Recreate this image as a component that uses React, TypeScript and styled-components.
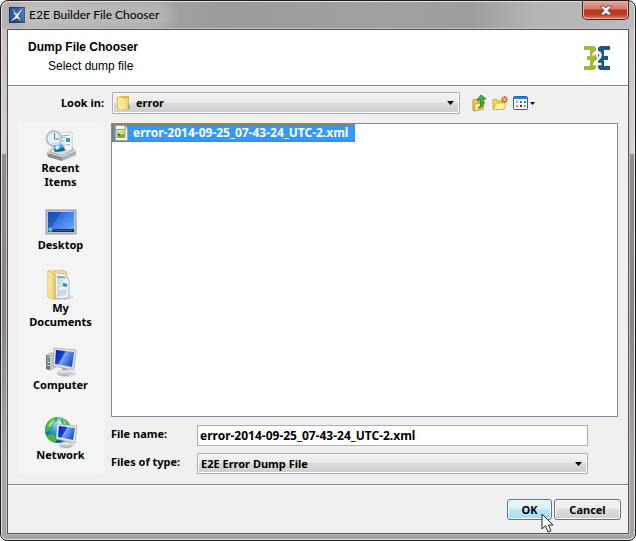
import React from "react";
import styled, { createGlobalStyle } from "styled-components";

const Global = createGlobalStyle`
  *, *::before, *::after { box-sizing: border-box; }
  body { margin: 0; background: #fff; }
  body, button, input, select {
    font-family: "Noto Sans", "Liberation Sans", sans-serif;
    font-size: 11px;
    font-weight: 700;
    line-height: 14px;
    color: #000;
  }
  svg { display: block; flex: none; }
`;

const Frame = styled.div`
  display: flex;
  flex-direction: column;
  min-height: 100vh;
  padding: 0 6px;
  padding-bottom: 6px;
  border: 1px solid #1d191c;
  border-radius: 8px 8px 7px 7px;
  box-shadow: inset 0 0 0 1px #e4e2e3;
  background:
    linear-gradient(90deg, #b5b2b2 0, #9b9b9b 35%, #a0a0a0 60%, #9d9d9d 74%, #b4b4b4 84%, #bdbdbd 100%) 0 0 / 100% 28px no-repeat,
    linear-gradient(180deg, #c6c0c0 0, #d6d0d0 152px, #918c8d 154px, #898586 60%, #a5a7a6 85%, #a3a4a3 100%);
`;

const TitleBar = styled.header`
  display: flex;
  align-items: flex-start;
  height: 28px;
  flex: none;
`;

const TitleText = styled.h1`
  display: flex;
  align-items: center;
  gap: 4px;
  flex: 1;
  height: 28px;
  margin: 0;
  padding-left: 2px;
  font: 400 12px/16px Lato, sans-serif;

  span {
    padding: 0 8px 0 6px;
    margin-left: -6px;
    border-radius: 9px;
    background: rgba(255, 255, 255, 0.2);
    box-shadow: 0 0 10px 6px rgba(255, 255, 255, 0.2);
  }
`;

const CloseButton = styled.button`
  display: flex;
  align-items: center;
  justify-content: center;
  width: 47px;
  height: 19px;
  padding: 0;
  border: 1px solid #43201f;
  border-top: 0;
  border-radius: 0 0 5px 5px;
  box-shadow: inset 0 0 0 1px #e9b5a9;
  background: linear-gradient(180deg, #e6a899 0, #d27867 45%, #b93219 50%, #bd3d22 75%, #d98069 100%);
`;

const Dialog = styled.main`
  display: flex;
  flex: 1;
  flex-direction: column;
  border: 1px solid #555354;
  outline: 1px solid #c4c3c3;
  background: #f0f0f0;
`;

const Banner = styled.section`
  display: flex;
  align-items: center;
  justify-content: space-between;
  height: 56px;
  padding: 0 18px 0 20px;
  border-bottom: 1px solid #828282;
  background: #fff;
`;

const BannerText = styled.div`
  align-self: flex-start;
  padding-top: 8px;
  font-family: "Liberation Sans", sans-serif;
  font-size: 12px;
  line-height: 19px;

  h2 { margin: 0; font-size: 12px; font-weight: 700; line-height: 19px; }
  p { margin: 0; padding-left: 20px; font-weight: 400; }
`;

const Body = styled.section`
  display: flex;
  flex: 1;
  flex-direction: column;
  gap: 9px;
  padding: 5px 10px 10px;
  border-top: 1px solid #fff;
`;

const LookRow = styled.div`
  display: flex;
  align-items: center;
`;

const LookLabel = styled.label`
  flex: none;
  width: 94px;
  padding-right: 8px;
  text-align: right;
`;

const Combo = styled.div<{ $height: number }>`
  display: flex;
  flex: 1;
  align-items: center;
  position: relative;
  height: ${(p) => p.$height}px;
  border: 1px solid #a9abb2;
  border-radius: 1px;
  box-shadow: inset 0 0 0 1px #fafafa;
  background: linear-gradient(180deg, #f3f3f3 0, #e9e9e9 48%, #dadada 50%, #cdcdcd 100%);

  > svg { position: absolute; left: 3px; pointer-events: none; }
  > svg:last-child { left: auto; right: 5px; }
`;

const Select = styled.select<{ $indent: number }>`
  flex: 1;
  height: 100%;
  padding: 0 20px 0 ${(p) => p.$indent}px;
  border: 0;
  outline: 0;
  appearance: none;
  background: transparent;
`;

const Tools = styled.div`
  display: flex;
  align-items: center;
  gap: 5px;
  flex: none;
  width: 158px;
  padding-left: 11px;
`;

const ToolButton = styled.button`
  display: flex;
  align-items: center;
  gap: 2px;
  padding: 0;
  border: 0;
  background: none;
`;

const Main = styled.div`
  display: grid;
  flex: 1;
  grid-template-columns: 85px 1fr;
  column-gap: 8px;
`;

const Places = styled.nav`
  display: flex;
  flex-direction: column;
  gap: 17px;
  padding: 6px 0 12px;
  background: #f4f4f4;
`;

const Place = styled.button`
  display: flex;
  flex-direction: column;
  align-items: center;
  padding: 0;
  border: 0;
  background: none;

  &:last-child { margin-top: auto; }
  span { max-width: 70px; }
`;

const PlaceIcon = styled.div`
  display: flex;
  align-items: center;
  justify-content: center;
  height: 32px;
`;

const Content = styled.div`
  display: flex;
  flex-direction: column;
  min-width: 0;
`;

const FileList = styled.ul`
  flex: 1;
  margin: 0 0 8px;
  padding: 0;
  border: 1px solid #828790;
  background: #fff;
  list-style: none;
`;

const FileItem = styled.li`
  display: flex;
  align-items: center;
  gap: 4px;
  width: fit-content;
  height: 18px;
  padding-right: 6px;
  border: 1px solid transparent;
  color: #fff;
  font-size: 12px;
  background:
    linear-gradient(#3399ff, #3399ff) padding-box,
    repeating-linear-gradient(90deg, #cc6600 0 2px, #3399ff 2px 3px) border-box;
`;

const Field = styled.div`
  display: flex;
  align-items: center;
  margin-right: 30px;

  & + & { margin-top: 7px; }
  > label { flex: none; width: 86px; padding-bottom: 3px; }
`;

const TextInput = styled.input`
  flex: 1;
  min-width: 0;
  height: 21px;
  padding: 0 2px;
  border: 1px solid #abadb3;
  border-radius: 0;
  outline: 0;
  font-size: 12px;
  background: #fff;
`;

const Footer = styled.footer`
  display: flex;
  justify-content: flex-end;
  gap: 2px;
  height: 49px;
  padding: 14px 7px 0;
  border-top: 1px solid #828282;
  box-shadow: inset 0 1px 0 #fff;
`;

const ActionButton = styled.button<{ $hot?: boolean }>`
  position: relative;
  width: ${(p) => (p.$hot ? 45 : 67)}px;
  height: 21px;
  padding: 0;
  border: 1px solid ${(p) => (p.$hot ? "#3c7fb1" : "#707070")};
  border-radius: 3px;
  box-shadow: inset 0 0 0 1px #fafdfe;
  background: ${(p) =>
    p.$hot
      ? "linear-gradient(180deg, #eaf6fd 0, #d9f0fc 48%, #bee6fd 50%, #a7d9f5 100%)"
      : "linear-gradient(180deg, #f2f2f2 0, #ebebeb 48%, #dddddd 50%, #cfcfcf 100%)"};
`;

const Pointer = styled.svg`
  position: absolute;
  left: 33px;
  top: 13px;
  pointer-events: none;
`;

const GradientDefs = styled.svg`
  position: absolute;
`;

const AppIcon = () => (
  <svg width="16" height="16" viewBox="0 0 16 16">
    <rect width="16" height="16" fill="#123768" />
    <rect x="1" y="1" width="14" height="14" fill="#28599b" />
    <path d="M1 15 8 8 15 15z" fill="#17427c" />
    <path d="M14 1 9 9l3 5-4-3-5 3 4-5-3-4 4 2z" fill="#fff" />
    <path d="M2 14 13 3M4 2l4 7" stroke="#c9dbef" strokeWidth=".7" />
  </svg>
);

const CloseIcon = () => (
  <svg width="12" height="11" viewBox="0 0 12 11">
    <path d="M1 1h3.400L6 3l1.600-2H11v1.300L8 5.500l3 3.200V10H7.600L6 8l-1.600 2H1V8.700l3-3.200-3-3.200z" fill="#f6f6f6" stroke="#5b5364" />
  </svg>
);

const Logo = () => (
  <svg width="26" height="24" viewBox="0 0 26 24" role="img" aria-label="E2E">
    <path d="M0 0h10l2 2v20l-2 2H0v-4h6v-6H3v-4h3V4H0z" fill="#a1b83a" />
    <path d="M26 0H16l-2 2v20l2 2h10v-4h-6v-6h4v-4h-4V4h6z" fill="#1c5a83" />
    <path d="M12 0h2v6h-2zM12 18h2v6h-2z" fill="#fff" />
    <path d="M9.500 9.500c0-4.200 7-4.500 7-.3 0 3.500-5 4.500-6 8.800h7" fill="none" stroke="#fff" strokeWidth="2.600" />
    <path d="M11 10.500h2v3l-2 1.500z" fill="#a1b83a" />
    <path d="M14.500 16.500l3.500-3.500v3.500z" fill="#1c5a83" />
  </svg>
);

const Arrow = () => (
  <svg width="7" height="4" viewBox="0 0 7 4"><path d="M0 0h7L3.500 4z" /></svg>
);

const FolderIcon = () => (
  <svg width="16" height="16" viewBox="0 0 16 16">
    <path d="M1 2l2-1h5v13H2l-1-1z" fill="#e4c251" />
    <path d="M2 2l4 1v12l-4-2z" fill="#fae996" />
    <path d="M7 2l2-1h4v14H7z" fill="#dcb641" />
    <path d="M6 3l4 1v11l-4-1z" fill="#f8e58b" />
    <path d="M10 3h2v11h-2z" fill="#eed477" />
    <path d="M12.500 10h1v4h-1z" fill="#3fa1e0" />
  </svg>
);

const XmlIcon = () => (
  <svg width="16" height="16" viewBox="0 0 16 16">
    <path d="M2.500.5h9l3 3v12h-12z" fill="#fbfaf3" stroke="#a7a797" />
    <path d="M11.500 .5v3h3" fill="#ddd" stroke="#a7a797" strokeWidth=".7" />
    <rect x="4" y="4.500" width="8" height="8" fill="#e3edce" stroke="#7d8c6c" strokeWidth=".8" />
    <path d="M4.500 12V8.500l2-1 2 2 3-1V12z" fill="#79ad30" />
    <path d="M6 9l5-5 1.200 1.200-5 4.800z" fill="#e7bd43" />
    <path d="M5 11l1-2 1 1z" fill="#202020" />
  </svg>
);

const UpIcon = () => (
  <svg width="16" height="18" viewBox="0 0 16 18">
    <path d="M2 6l5-1v3l5-1v8l-9 2-1-1z" fill="#eece5c" stroke="#bd8f22" />
    <path d="M4 10l10-2-3 7-8 2z" fill="#ffef9e" stroke="#d0a234" />
    <path d="M7 14c3-1 3-4 2-8H6l4-5 5 4h-3c1.500 5 0 9-5 9z" fill="#43b338" stroke="#197519" strokeWidth=".8" />
  </svg>
);

const NewFolderIcon = () => (
  <svg width="16" height="16" viewBox="0 0 16 16">
    <path d="M1 4.500h4l1 1.500h6v8H1z" fill="#f1d66a" stroke="#c8981b" strokeWidth=".8" />
    <path d="M4 8h10l-2.500 6.500h-10z" fill="#fff2a9" stroke="#d5a52b" strokeWidth=".8" />
    <path d="M12.500 1v7M9 4.500h7M10 2l5 5M15 2l-5 5" stroke="#ee4b25" strokeWidth="1.200" />
    <circle cx="12.500" cy="4.500" r="1.500" fill="#ffc63f" />
  </svg>
);

const ViewIcon = () => (
  <svg width="15" height="14" viewBox="0 0 15 14">
    <rect x=".5" y=".5" width="14" height="13" rx="1" fill="#fff" stroke="#1765bf" />
    <path d="M1 1h13v2H1z" fill="#2b80e0" />
    <path d="M3 5h2v2H3z" fill="#b39fb4" />
    <path d="M7 5h2v2H7z" fill="#4274d8" />
    <path d="M11 5h2v2h-2z" fill="#24984b" />
    <path d="M3 9h2v2H3z" fill="#ec7655" />
    <path d="M7 9h2v2H7z" fill="#263fa4" />
    <path d="M11 9h2v2h-2z" fill="#c5a323" />
  </svg>
);

const Defs = () => (
  <GradientDefs width="0" height="0" aria-hidden="true">
    <defs>
      <linearGradient id="desk" x2="1" y2="1"><stop stopColor="#134dbc" /><stop offset=".55" stopColor="#4589ec" /><stop offset="1" stopColor="#6fb1ff" /></linearGradient>
      <linearGradient id="screen" x2="1" y2=".5"><stop stopColor="#0018ae" /><stop offset=".45" stopColor="#1640d8" /><stop offset=".5" stopColor="#7da7f0" /><stop offset="1" stopColor="#2455cd" /></linearGradient>
      <linearGradient id="folder"><stop stopColor="#fff1a9" /><stop offset="1" stopColor="#e9ca67" /></linearGradient>
      <radialGradient id="globe" cx=".55" cy=".25" r=".8"><stop stopColor="#d8f6ff" /><stop offset=".4" stopColor="#37a6dc" /><stop offset="1" stopColor="#084a91" /></radialGradient>
      <linearGradient id="metal" x2="0" y2="1"><stop stopColor="#f7f7f7" /><stop offset="1" stopColor="#a7abad" /></linearGradient>
    </defs>
  </GradientDefs>
);

const RecentIcon = () => (
  <svg width="32" height="32" viewBox="0 0 32 32">
    <path d="M1 24l7-7h20l3 6-13 8z" fill="#d5d7d7" />
    <path d="M2 24l15 4v4L3 28z" fill="#8b9091" />
    <path d="M17 28l14-6v4l-14 6z" fill="#adb0b0" />
    <path d="M5 23l5-4 18 2-11 5z" fill="#eef0f0" stroke="#737777" strokeWidth=".5" />
    <path d="M15 4l12-1v18l-12 1z" fill="#fafcfc" stroke="#a8b3b9" strokeWidth=".6" />
    <path d="M17 7l8-1M17 9l4-.5M17 12l3-.2M21 16l4-.4" stroke="#9ba6ae" />
    <path d="M21 9h4v4h-4z" fill="#2ba1bf" />
    <circle cx="9" cy="9.500" r="8.500" fill="#bdc8ce" />
    <circle cx="9" cy="9.500" r="6.800" fill="#e1f0f6" stroke="#a4b1b8" strokeWidth=".6" />
    <path d="M9.500 4v6h5" fill="none" stroke="#5b8298" />
    <path d="M7 15l12-1 2 9-11 1z" fill="#fff" stroke="#a5b4bf" strokeWidth=".5" />
    <path d="M8 16l10-1 2 7-10 1z" fill="#4eb2e4" />
    <path d="M9 20l4-2 3 1 3-1 1 4-10 1z" fill="#176795" />
    <path d="M10 18l3-2 2 3-4 2z" fill="#d6f6ff" />
  </svg>
);

const DesktopIcon = () => (
  <svg width="32" height="26" viewBox="0 0 32 26">
    <rect x="1" y="1" width="30" height="24" fill="#b9c3ce" stroke="#8c98a6" />
    <rect x="3" y="3" width="26" height="20" fill="url(#desk)" />
    <path d="M3 3h13L6 19H3z" fill="#174db8" opacity=".6" />
    <path d="M3 20h26v3H3z" fill="#202f4b" />
    <path d="M9 21h18v1H9z" fill="#4f607c" />
    <circle cx="5.500" cy="20.500" r="2.500" fill="#2aa1cf" />
    <path d="M5 19v3M4 20.500h3" stroke="#f4df70" strokeWidth=".7" />
  </svg>
);

const DocsIcon = () => (
  <svg width="32" height="32" viewBox="0 0 32 32">
    <path d="M19 31l10-2-6-6z" fill="#ddd" />
    <path d="M3 2l15-1 4 2v27H8l-5-2z" fill="#f0d888" stroke="#d4b860" strokeWidth=".6" />
    <path d="M10 4l10 1 3 4v20l-12 1z" fill="#f7fafb" stroke="#9eb0bb" strokeWidth=".6" />
    <path d="M13 7l9 1 2 4v17l-11 1z" fill="#e9eff4" stroke="#8c9eaa" strokeWidth=".6" />
    <path d="M14 11l4 .5M14 14h4M14 17h4M14 22l8-.5M14 24l8-.5M14 26l7-.5" stroke="#b2c5d5" />
    <path d="M12 8l8 1" stroke="#2e9a9b" />
    <path d="M18 14l4 1v3l-4-1z" fill="#258aa7" />
    <path d="M3 2l7 4v25l-7-3z" fill="url(#folder)" stroke="#d0b050" strokeWidth=".6" />
  </svg>
);

const ComputerIcon = () => (
  <svg width="32" height="31" viewBox="0 0 32 31">
    <ellipse cx="22" cy="27" rx="9" ry="3" fill="#d9d9d9" />
    <path d="M1 8l5-3 5 1v15l-6 3-4-2z" fill="#c3c7c7" />
    <path d="M1 8l4 1v14l-4-1z" fill="#6d7375" />
    <path d="M2 10l3 .7M2 15l3 .7M2 18l3 .7" stroke="#d8dddd" />
    <path d="M2 12h2v2H2z" fill="#4be34b" />
    <path d="M17 19l5 1 1 5-6-1z" fill="#a8adae" />
    <ellipse cx="19" cy="26" rx="7" ry="3" fill="url(#metal)" stroke="#b1b4b5" strokeWidth=".5" />
    <path d="M9 1l22 2-2 20-21-4z" fill="#dce1e3" stroke="#8d999f" strokeWidth=".6" />
    <path d="M11 3l18 2-2 15-17-3z" fill="url(#screen)" />
  </svg>
);

const NetworkIcon = () => (
  <svg width="34" height="33" viewBox="0 0 34 33">
    <circle cx="14" cy="14" r="13" fill="url(#globe)" />
    <path d="M2 10C4 4 9 1 14 1l-1 4-5 2-1 5-4 4-2-1zM17 2l7 4 2 6-6-2-3-4zM2 19l7-1 4 5-2 4C6 25 3 23 2 19z" fill="#4ab540" />
    <path d="M4 10l3-5 4-2-2 4-3 4zM19 4l4 3-3 1z" fill="#a4e37a" />
    <path d="M20 23l5 1v4h-6z" fill="#afb2b4" />
    <ellipse cx="22" cy="29" rx="7" ry="3" fill="url(#metal)" stroke="#aeb2b4" strokeWidth=".5" />
    <path d="M13 8l20 2-2 17-19-4z" fill="#e3e7e9" stroke="#8e999f" strokeWidth=".6" />
    <path d="M15 10l16 2-2 12-15-3z" fill="url(#screen)" />
  </svg>
);

const places = [
  { name: "Recent Items", Icon: RecentIcon },
  { name: "Desktop", Icon: DesktopIcon },
  { name: "My Documents", Icon: DocsIcon },
  { name: "Computer", Icon: ComputerIcon },
  { name: "Network", Icon: NetworkIcon },
];

const fileName = "error-2014-09-25_07-43-24_UTC-2.xml";

export default function App() {
  return (
    <>
      <Global />
      <Defs />
      <Frame>
        <TitleBar>
          <TitleText><AppIcon /><span>E2E Builder File Chooser</span></TitleText>
          <CloseButton aria-label="Close"><CloseIcon /></CloseButton>
        </TitleBar>
        <Dialog>
          <Banner>
            <BannerText>
              <h2>Dump File Chooser</h2>
              <p>Select dump file</p>
            </BannerText>
            <Logo />
          </Banner>
          <Body>
            <LookRow>
              <LookLabel htmlFor="look">Look in:</LookLabel>
              <Combo $height={22}>
                <FolderIcon />
                <Select id="look" $indent={23}><option>error</option></Select>
                <Arrow />
              </Combo>
              <Tools>
                <ToolButton aria-label="Up one level"><UpIcon /></ToolButton>
                <ToolButton aria-label="Create new folder"><NewFolderIcon /></ToolButton>
                <ToolButton aria-label="View menu">
                  <ViewIcon />
                  <svg width="5" height="3" viewBox="0 0 5 3"><path d="M0 0h5L2.500 3z" /></svg>
                </ToolButton>
              </Tools>
            </LookRow>
            <Main>
              <Places>
                {places.map(({ name, Icon }) => (
                  <Place key={name}><PlaceIcon><Icon /></PlaceIcon><span>{name}</span></Place>
                ))}
              </Places>
              <Content>
                <FileList role="listbox" aria-label="Files">
                  <FileItem role="option" aria-selected="true"><XmlIcon />{fileName}</FileItem>
                </FileList>
                <Field>
                  <label htmlFor="name">File name:</label>
                  <TextInput id="name" defaultValue={fileName} />
                </Field>
                <Field>
                  <label htmlFor="type">Files of type:</label>
                  <Combo $height={21}>
                    <Select id="type" $indent={3}><option>E2E Error Dump File</option></Select>
                    <Arrow />
                  </Combo>
                </Field>
              </Content>
            </Main>
          </Body>
          <Footer>
            <ActionButton $hot>
              OK
              <Pointer width="14" height="21" viewBox="0 0 14 21">
                <path d="M1 1v15l3.500-3.300L7 19l3-1.200-2.600-5.800H12z" fill="#fff" stroke="#20233a" />
              </Pointer>
            </ActionButton>
            <ActionButton>Cancel</ActionButton>
          </Footer>
        </Dialog>
      </Frame>
    </>
  );
}
